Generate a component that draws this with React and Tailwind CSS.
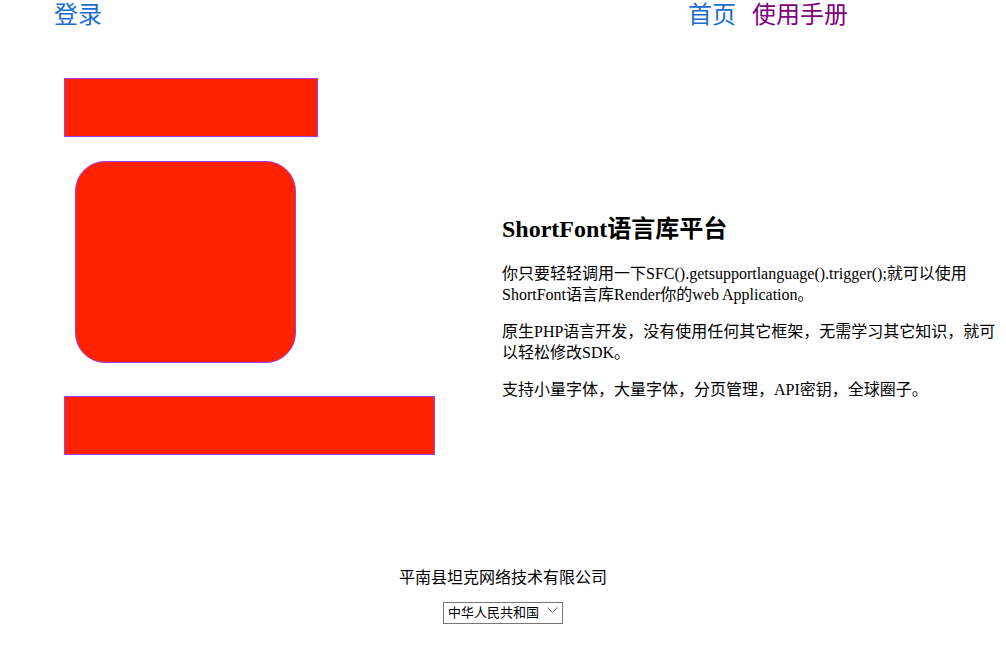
export default function App() {
  const cjkSans = { fontFamily: '"Liberation Sans", "Noto Sans CJK SC", sans-serif' };
  const cjkSerif = { fontFamily: '"Liberation Serif", "Noto Sans CJK SC", serif' };

  return (
    <div className="w-[1006px] min-h-[649px] bg-white text-black">
      <header className="h-[30px] flex items-center text-[24px] leading-[30px]" style={cjkSans}>
        <a href="#" className="ml-[54px] text-[#1a6dd1]">登录</a>
        <div className="ml-[586px] flex gap-[16px]">
          <a href="#" className="text-[#1a6dd1]">首页</a>
          <a href="#" className="text-[#800080]">使用手册</a>
        </div>
      </header>

      <main className="flex">
        <div className="w-[502px] pl-[64px] pt-[48px] flex flex-col">
          <div className="w-[254px] h-[59px] bg-[#ff2200] border border-[#a13cf0]" />
          <div className="ml-[11px] mt-[24px] w-[221px] h-[202px] bg-[#ff2200] border border-[#a13cf0] rounded-[30px]" />
          <div className="mt-[33px] w-[371px] h-[59px] bg-[#ff2200] border border-[#a13cf0]" />
        </div>
        <div className="w-[497px] pt-[185px]" style={cjkSerif}>
          <h2 className="text-[24px] leading-[28px] font-bold">ShortFont语言库平台</h2>
          <div className="mt-[20px] text-[16px] leading-[21px] flex flex-col gap-[16px]">
            <p>你只要轻轻调用一下SFC().getsupportlanguage().trigger();就可以使用ShortFont语言库Render你的web Application。</p>
            <p>原生PHP语言开发，没有使用任何其它框架，无需学习其它知识，就可以轻松修改SDK。</p>
            <p>支持小量字体，大量字体，分页管理，API密钥，全球圈子。</p>
          </div>
        </div>
      </main>

      <footer className="mt-[112px] flex flex-col items-center" style={cjkSans}>
        <div className="text-[16px] leading-[21px]">平南县坦克网络技术有限公司</div>
        <div className="mt-[12px] relative w-[120px] h-[22px]">
          <select className="appearance-none w-full h-full border border-[#767676] text-[13px] pl-[4px] bg-white text-black">
            <option>中华人民共和国</option>
          </select>
          <svg className="absolute right-[5px] top-[7px] pointer-events-none" width="11" height="7" viewBox="0 0 11 7">
            <path d="M0.5 0.5 L5.5 5.5 L10.5 0.5" fill="none" stroke="#6f6f6f" strokeWidth="1" />
          </svg>
        </div>
      </footer>
    </div>
  );
}
